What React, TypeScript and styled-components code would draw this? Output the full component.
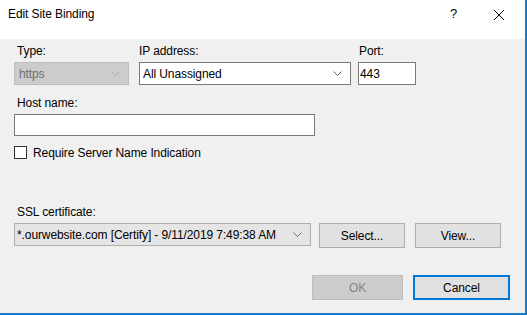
import styled, { createGlobalStyle } from 'styled-components';

const Global = createGlobalStyle`
  html, body { margin: 0; padding: 0; background: #f0f0f0; }
  body { font-family: "Liberation Sans", Arial, sans-serif; font-size: 12px; letter-spacing: -0.1px; color: #000; }
`;

const Window = styled.div`
  width: 527px;
  height: 315px;
  box-sizing: border-box;
  border-right: 2px solid #1979ca;
  border-bottom: 2px solid #1979ca;
  display: flex;
  flex-direction: column;
  background: #f0f0f0;
`;

const TitleBar = styled.div`
  height: 39px;
  flex: none;
  background: #fff;
  display: flex;
  align-items: flex-start;
  padding: 6px 0 0 8px;
  box-sizing: border-box;
  line-height: 16px;
`;

const Title = styled.div`
  flex: 1;
`;

const Help = styled.div`
  width: 10px;
  margin-right: 33px;
  font-size: 13px;
`;

const CloseBtn = styled.div`
  width: 12px;
  height: 12px;
  margin: 3px 20px 0 0;
  display: flex;
`;

const Body = styled.div`
  flex: 1;
  padding: 5px 15px 0 14px;
  display: flex;
  flex-direction: column;
`;

const Row = styled.div<{ $top?: number; $gap?: number }>`
  display: flex;
  align-items: flex-start;
  margin-top: ${(p) => p.$top ?? 0}px;
  gap: ${(p) => p.$gap ?? 0}px;
`;

const Field = styled.div<{ $ml?: number }>`
  display: flex;
  flex-direction: column;
  margin-left: ${(p) => p.$ml ?? 0}px;
`;

const Label = styled.div<{ $indent?: number }>`
  line-height: 15px;
  padding-left: ${(p) => p.$indent ?? 3}px;
  margin-bottom: 3px;
  white-space: nowrap;
`;

const Combo = styled.div<{ $w: number; $variant?: 'edit' | 'disabled' | 'list' }>`
  width: ${(p) => p.$w}px;
  height: 23px;
  box-sizing: border-box;
  display: flex;
  align-items: center;
  padding: 0 8px 0 ${(p) => (p.$variant === 'disabled' ? 4 : p.$variant === 'list' ? 2 : 3)}px;
  border: 1px solid
    ${(p) => (p.$variant === 'disabled' ? '#bfbfbf' : p.$variant === 'list' ? '#adadad' : '#7a7a7a')};
  background: ${(p) => (p.$variant === 'disabled' ? '#cccccc' : p.$variant === 'list' ? '#e5e5e5' : '#fff')};
  color: ${(p) => (p.$variant === 'disabled' ? '#6d6d6d' : '#000')};
  white-space: nowrap;
  span { flex: 1; overflow: hidden; }
`;

const TextBox = styled.div<{ $w: number; $h?: number }>`
  width: ${(p) => p.$w}px;
  height: ${(p) => p.$h ?? 23}px;
  box-sizing: border-box;
  border: 1px solid #7a7a7a;
  background: #fff;
  display: flex;
  align-items: center;
  padding-left: 1px;
`;

const CheckRow = styled.label`
  display: flex;
  align-items: center;
  gap: 6px;
  margin-top: 10px;
  height: 13px;
`;

const CheckBox = styled.span`
  width: 13px;
  height: 13px;
  box-sizing: border-box;
  border: 1px solid #333;
  background: #fff;
`;

const Button = styled.div<{ $w: number; $kind?: 'default' | 'disabled' }>`
  width: ${(p) => p.$w}px;
  height: 25px;
  box-sizing: border-box;
  display: flex;
  align-items: center;
  justify-content: center;
  background: ${(p) => (p.$kind === 'disabled' ? '#cccccc' : '#e1e1e1')};
  border: ${(p) =>
    p.$kind === 'default' ? '2px solid #0078d7' : p.$kind === 'disabled' ? '1px solid #bfbfbf' : '1px solid #adadad'};
  color: ${(p) => (p.$kind === 'disabled' ? '#838383' : '#000')};
`;

const ButtonPair = styled.div`
  display: flex;
  gap: 10px;
`;

const Footer = styled.div`
  display: flex;
  justify-content: flex-end;
  gap: 10px;
  margin-top: 27px;
`;

const Chevron = ({ color }: { color: string }) => (
  <svg width="9" height="5" viewBox="0 0 9 5">
    <path d="M0.5 0.5 L4.5 4.5 L8.5 0.5" fill="none" stroke={color} strokeWidth="1" />
  </svg>
);

export default function App() {
  return (
    <>
      <Global />
      <Window>
        <TitleBar>
          <Title>Edit Site Binding</Title>
          <Help>?</Help>
          <CloseBtn>
            <svg width="12" height="12" viewBox="0 0 12 12">
              <path d="M1 1 L11 11 M11 1 L1 11" stroke="#000" strokeWidth="1" />
            </svg>
          </CloseBtn>
        </TitleBar>
        <Body>
          <Row>
            <Field>
              <Label>Type:</Label>
              <Combo $w={115} $variant="disabled">
                <span>https</span>
                <Chevron color="#a8a8a8" />
              </Combo>
            </Field>
            <Field $ml={10}>
              <Label $indent={0}>IP address:</Label>
              <Combo $w={212}>
                <span>All Unassigned</span>
                <Chevron color="#606060" />
              </Combo>
            </Field>
            <Field $ml={7}>
              <Label $indent={1}>Port:</Label>
              <TextBox $w={58}>443</TextBox>
            </Field>
          </Row>
          <Row $top={11}>
            <Field>
              <Label>Host name:</Label>
              <TextBox $w={301} $h={22} />
            </Field>
          </Row>
          <CheckRow>
            <CheckBox />
            Require Server Name Indication
          </CheckRow>
          <Row $top={46}>
            <Field>
              <Label>SSL certificate:</Label>
              <Row $gap={8}>
                <Combo $w={297} $variant="list">
                  <span>*.ourwebsite.com [Certify] - 9/11/2019 7:49:38 AM</span>
                  <Chevron color="#707070" />
                </Combo>
                <ButtonPair>
                  <Button $w={86}>Select...</Button>
                  <Button $w={86}>View...</Button>
                </ButtonPair>
              </Row>
            </Field>
          </Row>
          <Footer>
            <Button $w={91} $kind="disabled">OK</Button>
            <Button $w={97} $kind="default">Cancel</Button>
          </Footer>
        </Body>
      </Window>
    </>
  );
}
